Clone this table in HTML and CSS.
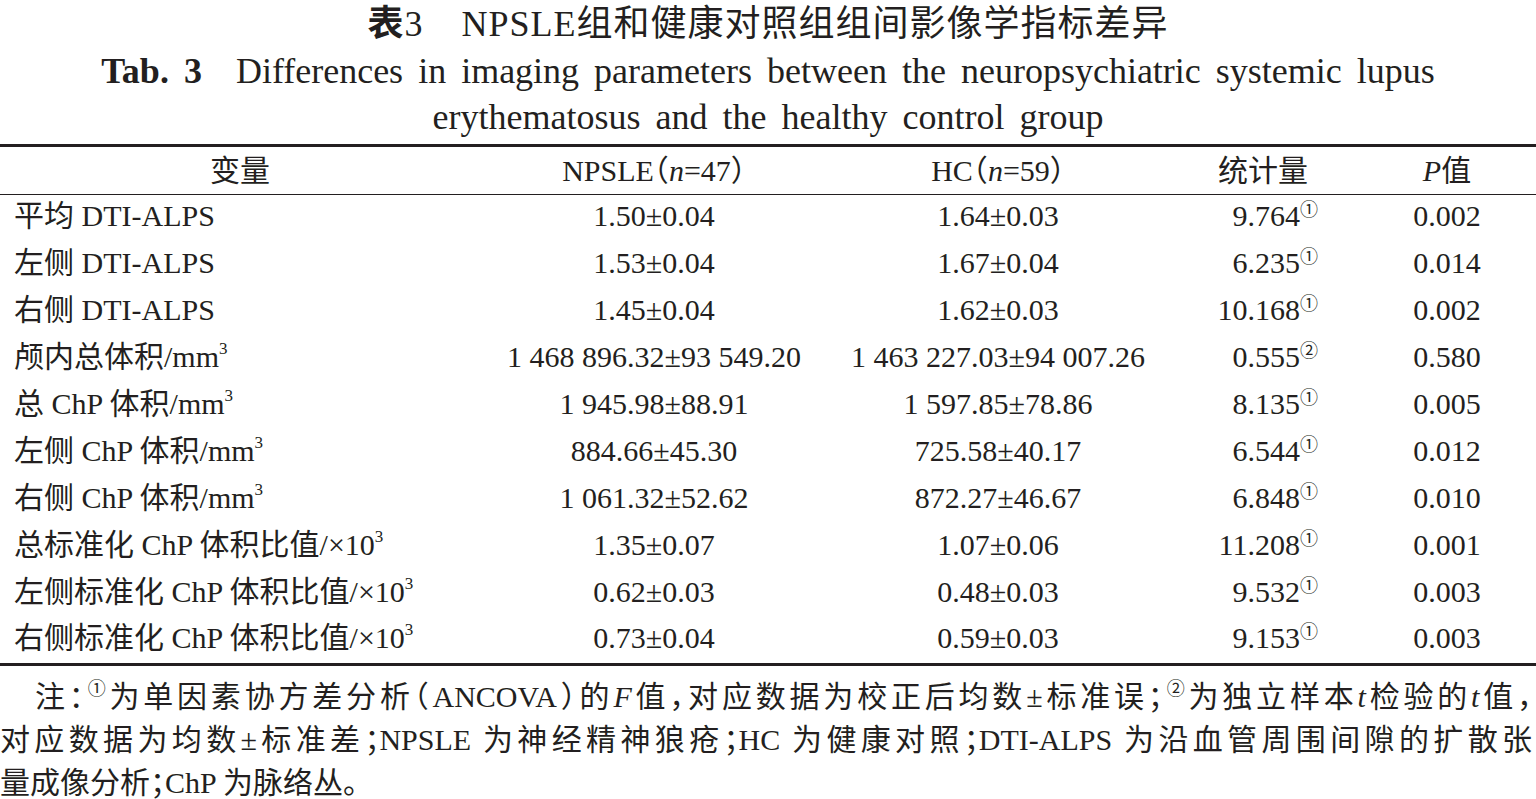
FILE: index.html
```html
<!DOCTYPE html>
<html lang="zh">
<head>
<meta charset="utf-8">
<title>表3</title>
<link rel="stylesheet" href="styles.css">
</head>
<body>
<div class="page">
  <div class="title-cn"><span class="b">表</span>3<span class="gap-cn"></span>NPSLE组和健康对照组组间影像学指标差异</div>
  <div class="title-en"><span class="b">Tab. 3</span><span class="gap"></span>Differences in imaging parameters between the neuropsychiatric systemic lupus<br>erythematosus and the healthy control group</div>
  <table class="tbl">
    <colgroup>
      <col class="c1"><col class="c2"><col class="c3"><col class="c4"><col class="c5">
    </colgroup>
    <thead>
      <tr><th>变量</th><th>NPSLE（<i>n</i>=47）</th><th>HC（<i>n</i>=59）</th><th>统计量</th><th><i>P</i>值</th></tr>
    </thead>
    <tbody>
      <tr><td>平均 DTI-ALPS</td><td>1.50±0.04</td><td>1.64±0.03</td><td class="st">9.764<sup class="cir">①</sup></td><td>0.002</td></tr>
      <tr><td>左侧 DTI-ALPS</td><td>1.53±0.04</td><td>1.67±0.04</td><td class="st">6.235<sup class="cir">①</sup></td><td>0.014</td></tr>
      <tr><td>右侧 DTI-ALPS</td><td>1.45±0.04</td><td>1.62±0.03</td><td class="st">10.168<sup class="cir">①</sup></td><td>0.002</td></tr>
      <tr><td>颅内总体积/mm<sup class="p3">3</sup></td><td>1 468 896.32±93 549.20</td><td>1 463 227.03±94 007.26</td><td class="st">0.555<sup class="cir">②</sup></td><td>0.580</td></tr>
      <tr><td>总 ChP 体积/mm<sup class="p3">3</sup></td><td>1 945.98±88.91</td><td>1 597.85±78.86</td><td class="st">8.135<sup class="cir">①</sup></td><td>0.005</td></tr>
      <tr><td>左侧 ChP 体积/mm<sup class="p3">3</sup></td><td>884.66±45.30</td><td>725.58±40.17</td><td class="st">6.544<sup class="cir">①</sup></td><td>0.012</td></tr>
      <tr><td>右侧 ChP 体积/mm<sup class="p3">3</sup></td><td>1 061.32±52.62</td><td>872.27±46.67</td><td class="st">6.848<sup class="cir">①</sup></td><td>0.010</td></tr>
      <tr><td>总标准化 ChP 体积比值/×10<sup class="p3">3</sup></td><td>1.35±0.07</td><td>1.07±0.06</td><td class="st">11.208<sup class="cir">①</sup></td><td>0.001</td></tr>
      <tr><td>左侧标准化 ChP 体积比值/×10<sup class="p3">3</sup></td><td>0.62±0.03</td><td>0.48±0.03</td><td class="st">9.532<sup class="cir">①</sup></td><td>0.003</td></tr>
      <tr><td>右侧标准化 ChP 体积比值/×10<sup class="p3">3</sup></td><td>0.73±0.04</td><td>0.59±0.03</td><td class="st">9.153<sup class="cir">①</sup></td><td>0.003</td></tr>
    </tbody>
  </table>
  <div class="note">
    <div class="nl first">注：<sup class="cir">①</sup>为单因素协方差分析（ANCOVA）的<i>F</i>值，对应数据为校正后均数±标准误；<sup class="cir">②</sup>为独立样本<i>t</i>检验的<i>t</i>值，</div>
    <div class="nl">对应数据为均数±标准差；NPSLE 为神经精神狼疮；HC 为健康对照；DTI-ALPS 为沿血管周围间隙的扩散张</div>
    <div class="nl last">量成像分析；ChP 为脉络丛。</div>
  </div>
</div>
</body>
</html>
```
FILE: styles.css
```css
html, body {
  margin: 0;
  padding: 0;
  background: #ffffff;
}
body {
  color: #231f20;
  font-family: "Liberation Serif", "Noto Sans CJK SC", serif;
  font-feature-settings: "halt";
}
.page {
  width: 1536px;
}
.b {
  font-weight: bold;
}
.title-cn {
  font-size: 36px;
  line-height: 48px;
  letter-spacing: 1px;
  text-align: center;
}
.gap-cn {
  display: inline-block;
  width: 38px;
}
.title-en {
  font-size: 36px;
  line-height: 46px;
  word-spacing: 6px;
  text-align: center;
  margin-bottom: 4px;
}
.gap {
  display: inline-block;
  width: 34px;
}
.tbl {
  width: 1536px;
  border-collapse: collapse;
  table-layout: fixed;
  font-size: 30px;
  line-height: 34px;
}
.c1 { width: 480px; }
.c2 { width: 348px; }
.c3 { width: 340px; }
.c4 { width: 190px; }
.c5 { width: 178px; }
.tbl thead tr {
  height: 49px;
}
.tbl th {
  font-weight: normal;
  padding: 0;
  text-align: center;
  vertical-align: middle;
  border-top: 3px solid #231f20;
  border-bottom: 1.5px solid #231f20;
  white-space: nowrap;
}
.tbl tbody tr {
  height: 47px;
}
.tbl td {
  padding: 0 0 5px 0;
  text-align: center;
  vertical-align: middle;
  white-space: nowrap;
}
.tbl td:first-child {
  text-align: left;
  padding-left: 14px;
}
.tbl td.st {
  text-align: right;
  padding-right: 40px;
}
.tbl tbody tr:last-child td {
  border-bottom: 3px solid #231f20;
}
.cir {
  font-family: "DejaVu Serif", "Noto Sans CJK SC", serif;
  font-size: 18px;
  vertical-align: 10px;
  line-height: 0;
}
.p3 {
  font-size: 17px;
  vertical-align: 13px;
  line-height: 0;
}
.note {
  font-size: 30px;
  line-height: 43px;
  padding-top: 9px;
  width: 1532px;
}
.nl {
  text-align: justify;
  text-align-last: justify;
  white-space: nowrap;
}
.nl.first {
  padding-left: 35px;
}
.nl.last {
  text-align-last: left;
}
.note .cir {
  vertical-align: 12px;
}
```
